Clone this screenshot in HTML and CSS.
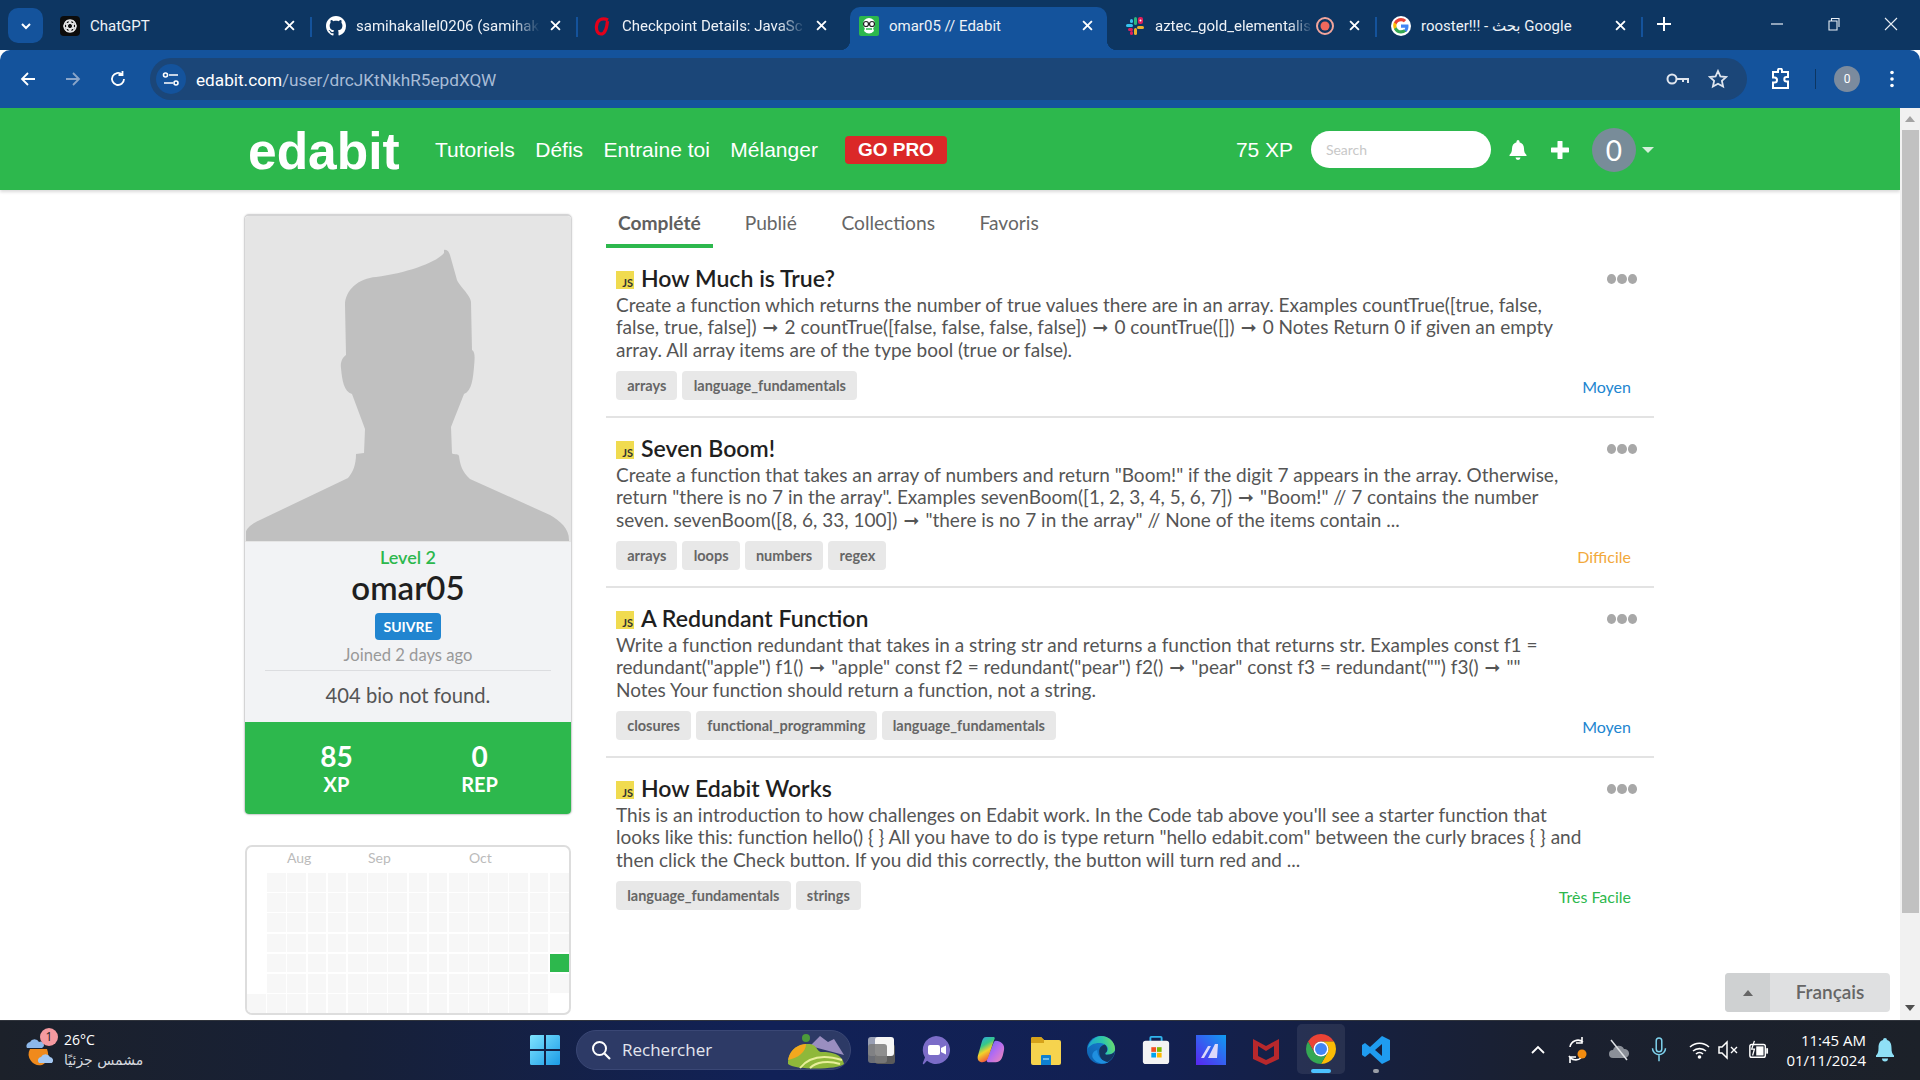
FILE: index.html
```html
<!DOCTYPE html>
<html lang="fr">
<head>
<meta charset="utf-8">
<title>omar05 // Edabit</title>
<link rel="stylesheet" href="styles.css">
</head>
<body>
<div class="tabstrip">
  <button class="tabsearch"><svg viewBox="0 0 12 12" width="12" height="12"><path d="M2 4l4 4 4-4" fill="none" stroke="#fff" stroke-width="2"/></svg></button>
  <div class="tab sep">
    <svg class="fav" viewBox="0 0 20 20"><rect width="20" height="20" rx="4" fill="#0c0c0c"/><g fill="none" stroke="#e8e8e8" stroke-width="1.3"><circle cx="10" cy="10" r="6"/><ellipse cx="10" cy="10" rx="6" ry="2.6" transform="rotate(60 10 10)"/><ellipse cx="10" cy="10" rx="6" ry="2.6" transform="rotate(-60 10 10)"/><ellipse cx="10" cy="10" rx="6" ry="2.6"/></g></svg>
    <span class="tabtitle">ChatGPT</span>
    <svg class="x" viewBox="0 0 10 10"><path d="M1 1l8 8M9 1l-8 8" stroke="#fff" stroke-width="1.7"/></svg>
  </div>
  <div class="tab sep">
    <svg class="fav" viewBox="0 0 16 16"><path fill="#fff" d="M8 0C3.58 0 0 3.58 0 8c0 3.54 2.29 6.53 5.47 7.59.4.07.55-.17.55-.38 0-.19-.01-.82-.01-1.49-2.01.37-2.53-.49-2.69-.94-.09-.23-.48-.94-.82-1.13-.28-.15-.68-.52-.01-.53.63-.01 1.08.58 1.23.82.72 1.21 1.87.87 2.33.66.07-.52.28-.87.51-1.07-1.78-.2-3.64-.89-3.64-3.95 0-.87.31-1.59.82-2.15-.08-.2-.36-1.02.08-2.12 0 0 .67-.21 2.2.82.64-.18 1.32-.27 2-.27s1.36.09 2 .27c1.53-1.04 2.2-.82 2.2-.82.44 1.1.16 1.92.08 2.12.51.56.82 1.27.82 2.15 0 3.07-1.87 3.75-3.65 3.95.29.25.54.73.54 1.48 0 1.07-.01 1.93-.01 2.2 0 .21.15.46.55.38A8.013 8.013 0 0016 8c0-4.42-3.58-8-8-8z"/></svg>
    <span class="tabtitle fade">samihakallel0206 (samihak</span>
    <svg class="x" viewBox="0 0 10 10"><path d="M1 1l8 8M9 1l-8 8" stroke="#fff" stroke-width="1.7"/></svg>
  </div>
  <div class="tab">
    <svg class="fav" viewBox="0 0 20 20"><path d="M16 4C10 1 5 4 4.500 10 4 15 6 18 9 18c5 0 6-8 6.500-13" fill="none" stroke="#e2001a" stroke-width="3.200"/></svg>
    <span class="tabtitle fade">Checkpoint Details: JavaSc</span>
    <svg class="x" viewBox="0 0 10 10"><path d="M1 1l8 8M9 1l-8 8" stroke="#fff" stroke-width="1.7"/></svg>
  </div>
  <div class="tab active">
    <svg class="fav" viewBox="0 0 20 20"><rect width="20" height="20" rx="2" fill="#2db84d"/><circle cx="10" cy="8" r="6" fill="#fff"/><path d="M5 15q5 5 10 0l-1-3H6z" fill="#fff"/><circle cx="7" cy="8" r="2.500" fill="none" stroke="#222" stroke-width="1.200"/><circle cx="13" cy="8" r="2.500" fill="none" stroke="#222" stroke-width="1.200"/><path d="M7 13h6" stroke="#2db84d" stroke-width="1.500"/></svg>
    <span class="tabtitle">omar05 // Edabit</span>
    <svg class="x" viewBox="0 0 10 10"><path d="M1 1l8 8M9 1l-8 8" stroke="#fff" stroke-width="1.7"/></svg>
  </div>
  <div class="tab sep">
    <svg class="fav" viewBox="0 0 20 20"><rect x="1" y="8" width="7" height="3" rx="1.500" fill="#36c5f0"/><rect x="5" y="3" width="3" height="4" rx="1.500" fill="#36c5f0"/><rect x="9" y="1" width="3" height="8" rx="1.500" fill="#2eb67d"/><rect x="13" y="1" width="5" height="7" rx="2" fill="#e01e5a"/><circle cx="15.500" cy="4.500" r="1" fill="#fff"/><rect x="12" y="10" width="7" height="3" rx="1.500" fill="#ecb22e"/><rect x="9" y="12" width="3" height="7" rx="1.500" fill="#ecb22e"/><rect x="3" y="12" width="5" height="3" rx="1.500" fill="#e01e5a"/><rect x="5" y="15" width="3" height="4" rx="1.500" fill="#e01e5a"/></svg>
    <span class="tabtitle fade short">aztec_gold_elementalis</span>
    <svg class="rec" viewBox="0 0 20 20"><circle cx="10" cy="10" r="8" fill="none" stroke="#f2a59c" stroke-width="2"/><circle cx="10" cy="10" r="4.500" fill="#f0685c"/></svg>
    <svg class="x" viewBox="0 0 10 10"><path d="M1 1l8 8M9 1l-8 8" stroke="#fff" stroke-width="1.7"/></svg>
  </div>
  <div class="tab sep">
    <svg class="fav" viewBox="0 0 24 24"><circle cx="12" cy="12" r="12" fill="#fff"/><path fill="#4285f4" d="M21 12.200c0-.7-.1-1.300-.2-1.900H12v3.700h5.100c-.2 1.200-.9 2.200-1.900 2.800v2.400h3.100C20 17.500 21 15.100 21 12.200z"/><path fill="#34a853" d="M12 21c2.500 0 4.600-.8 6.200-2.300l-3.100-2.400c-.8.600-1.900.9-3.100.9-2.400 0-4.500-1.600-5.200-3.800H3.600v2.400C5.200 19 8.400 21 12 21z"/><path fill="#fbbc05" d="M6.800 13.400c-.4-1.200-.4-2.500 0-3.700V7.300H3.600c-1.300 2.600-1.300 5.600 0 8.200z"/><path fill="#ea4335" d="M12 6.200c1.400 0 2.600.5 3.500 1.400l2.700-2.700C16.600 3.400 14.500 2.500 12 2.500c-3.600 0-6.800 2-8.400 5l3.200 2.400C7.500 7.700 9.600 6.200 12 6.200z"/></svg>
    <span class="tabtitle">rooster!!! - بحث Google</span>
    <svg class="x" viewBox="0 0 10 10"><path d="M1 1l8 8M9 1l-8 8" stroke="#fff" stroke-width="1.7"/></svg>
  </div>
  <svg class="newtab" viewBox="0 0 14 14"><path d="M7 0v14M0 7h14" stroke="#fff" stroke-width="2"/></svg>
  <div class="winctl">
    <svg viewBox="0 0 14 14"><path d="M1 7h12" stroke="#e8eef5" stroke-width="1.200"/></svg>
    <svg viewBox="0 0 14 14"><path d="M2 4h8v9H2zM4.500 4V1.500h7.500V10" fill="none" stroke="#e8eef5" stroke-width="1.100"/></svg>
    <svg viewBox="0 0 14 14"><path d="M1 1l12 12M13 1L1 13" stroke="#e8eef5" stroke-width="1.100"/></svg>
  </div>
</div>

<div class="toolbar">
  <div class="navbtns">
    <svg viewBox="0 0 18 18"><path d="M16 9H3M9 3L3 9l6 6" fill="none" stroke="#fff" stroke-width="1.800"/></svg>
    <svg viewBox="0 0 18 18"><path d="M2 9h13M9 3l6 6-6 6" fill="none" stroke="#8aa5c9" stroke-width="1.800"/></svg>
    <svg viewBox="0 0 18 18"><path d="M15 9a6 6 0 1 1-2-4.500M13.500 1v4h-4" fill="none" stroke="#fff" stroke-width="1.800"/></svg>
  </div>
  <div class="omnibox">
    <span class="siteinfo"><svg viewBox="0 0 18 18" width="18" height="18"><g fill="none" stroke="#fff" stroke-width="1.600"><path d="M7 5h9M2 13h9"/><circle cx="3.500" cy="5" r="2"/><circle cx="14" cy="13" r="2"/></g></svg></span>
    <span class="url"><span class="host">edabit.com</span>/user/drcJKtNkhR5epdXQW</span>
    <svg class="okey" viewBox="0 0 24 16"><g fill="none" stroke="#dfe5ee" stroke-width="2"><circle cx="6" cy="8" r="4.500"/><path d="M10.500 8H22v4M17 8v3"/></g></svg>
    <svg class="ostar" viewBox="0 0 20 20"><path d="M10 2l2.400 5.400 5.800.6-4.300 3.900 1.200 5.700L10 14.700l-5.100 2.900 1.200-5.700L1.800 8l5.800-.6z" fill="none" stroke="#dfe5ee" stroke-width="1.800"/></svg>
  </div>
  <div class="toolright">
    <svg class="puzzle" viewBox="0 0 20 22"><path d="M7 4V2.500a2 2 0 0 1 4 0V4h6v5h-1.500a2.200 2.200 0 0 0 0 4.400H17V20H2v-5.500h1.500a2.500 2.500 0 0 0 0-5H2V4z" fill="none" stroke="#fff" stroke-width="2"/></svg>
    <span class="tooldiv"></span>
    <span class="profile">0</span>
    <svg class="kebab" viewBox="0 0 4 18"><circle cx="2" cy="2.500" r="1.800" fill="#fff"/><circle cx="2" cy="9" r="1.800" fill="#fff"/><circle cx="2" cy="15.500" r="1.800" fill="#fff"/></svg>
  </div>
</div>

<div class="viewport">
  <div class="page">
    <header class="hdr">
      <a class="logo">edabit</a>
      <nav class="mainnav"><a>Tutoriels</a><a>Défis</a><a>Entraine toi</a><a>Mélanger</a></nav>
      <a class="gopro">GO PRO</a>
      <span class="xp">75 XP</span>
      <span class="search">Search</span>
      <svg class="bell" viewBox="0 0 18 20"><path d="M9 0a1.500 1.500 0 0 1 1.500 1.500v.7C13.500 3 15 5.500 15 8.500c0 3.500 1 5 2.500 6.500v1H.5v-1C2 13.500 3 12 3 8.500c0-3 1.500-5.500 4.500-6.300v-.7A1.500 1.500 0 0 1 9 0zM6.500 17.500h5a2.500 2.500 0 0 1-5 0z" fill="#fff"/></svg>
      <svg class="plus" viewBox="0 0 18 18"><path d="M9 1v16M1 9h16" stroke="#fff" stroke-width="5" stroke-linecap="round"/></svg>
      <span class="useravatar">0</span>
      <span class="caret"></span>
    </header>
    <div class="content">
      <aside class="side">
        <section class="card">
          <div class="photo">
            <svg viewBox="245 216 326 326" width="326" height="326"><path fill="#c0c0c0" d="M444 250c3-1 5 2 6 5l7 25c1 4 14 16 14 22l1 48c3 2 3 6 2 17s-2 24-10 27l-13 33 1 26c0 2 6 0 7 3 1 8 3 16 11 23l80 36c10 6 19 13 19 25v1H246v-9c0-3 5-8 14-12l88-42c5-6 8-13 8-24l8-1 1-24-13-35c-8-2-10-14-11-26-1-6 2-11 5-13l-1-50c0-15 14-27 31-28 30-4 60-14 68-24z"/></svg>
          </div>
          <div class="info">
            <div class="level">Level 2</div>
            <h2 class="uname">omar05</h2>
            <button class="follow">SUIVRE</button>
            <div class="joined">Joined 2 days ago</div>
            <div class="bio">404 bio not found.</div>
          </div>
          <div class="stats">
            <div class="stat"><b>85</b><span>XP</span></div>
            <div class="stat"><b>0</b><span>REP</span></div>
          </div>
        </section>
        <section class="cal">
          <div class="months"><span class="maug">Aug</span><span class="msep">Sep</span><span class="moct">Oct</span></div>
          <div class="grid">
            <i class="e"></i><i></i><i></i><i></i><i></i><i></i><i></i><i></i><i></i><i></i><i></i><i></i><i></i><i></i><i></i><i></i>
            <i class="e"></i><i></i><i></i><i></i><i></i><i></i><i></i><i></i><i></i><i></i><i></i><i></i><i></i><i></i><i></i><i></i>
            <i class="e"></i><i></i><i></i><i></i><i></i><i></i><i></i><i></i><i></i><i></i><i></i><i></i><i></i><i></i><i></i><i></i>
            <i class="e"></i><i></i><i></i><i></i><i></i><i></i><i></i><i></i><i></i><i></i><i></i><i></i><i></i><i></i><i></i><i></i>
            <i class="e"></i><i></i><i></i><i></i><i></i><i></i><i></i><i></i><i></i><i></i><i></i><i></i><i></i><i></i><i></i><i class="g"></i>
            <i class="e"></i><i></i><i></i><i></i><i></i><i></i><i></i><i></i><i></i><i></i><i></i><i></i><i></i><i></i><i></i><i></i>
            <i></i><i></i><i></i><i></i><i></i><i></i><i></i><i></i><i></i><i></i><i></i><i></i><i></i><i></i><i></i><i class="e"></i>
          </div>
        </section>
      </aside>
      <main class="feed">
        <div class="ftabs"><a class="on">Complété</a><a>Publié</a><a>Collections</a><a>Favoris</a></div>

        <article class="item">
          <div class="itext">
            <h3><span class="js">JS</span>How Much is True?</h3>
            <p>Create a function which returns the number of true values there are in an array. Examples countTrue([true, false, false, true, false]) &#8202;➞&#8202; 2 countTrue([false, false, false, false]) &#8202;➞&#8202; 0 countTrue([]) &#8202;➞&#8202; 0 Notes Return 0 if given an empty array. All array items are of the type bool (true or false).</p>
            <div class="tags"><span>arrays</span><span>language_fundamentals</span></div>
          </div>
          <div class="iside"><span class="dots"><i></i><i></i><i></i></span><span class="diff med">Moyen</span></div>
        </article>

        <article class="item">
          <div class="itext">
            <h3><span class="js">JS</span>Seven Boom!</h3>
            <p>Create a function that takes an array of numbers and return "Boom!" if the digit 7 appears in the array. Otherwise, return "there is no 7 in the array". Examples sevenBoom([1, 2, 3, 4, 5, 6, 7]) &#8202;➞&#8202; "Boom!" // 7 contains the number seven. sevenBoom([8, 6, 33, 100]) &#8202;➞&#8202; "there is no 7 in the array" // None of the items contain ...</p>
            <div class="tags"><span>arrays</span><span>loops</span><span>numbers</span><span>regex</span></div>
          </div>
          <div class="iside"><span class="dots"><i></i><i></i><i></i></span><span class="diff hard">Difficile</span></div>
        </article>

        <article class="item">
          <div class="itext">
            <h3><span class="js">JS</span>A Redundant Function</h3>
            <p>Write a function redundant that takes in a string str and returns a function that returns str. Examples const f1 = redundant("apple") f1() &#8202;➞&#8202; "apple" const f2 = redundant("pear") f2() &#8202;➞&#8202; "pear" const f3 = redundant("") f3() &#8202;➞&#8202; ""<br>Notes Your function should return a function, not a string.</p>
            <div class="tags"><span>closures</span><span>functional_programming</span><span>language_fundamentals</span></div>
          </div>
          <div class="iside"><span class="dots"><i></i><i></i><i></i></span><span class="diff med">Moyen</span></div>
        </article>

        <article class="item last">
          <div class="itext">
            <h3><span class="js">JS</span>How Edabit Works</h3>
            <p>This is an introduction to how challenges on Edabit work. In the Code tab above you'll see a starter function that looks like this: function hello() { } All you have to do is type return "hello edabit.com" between the curly braces { } and then click the Check button. If you did this correctly, the button will turn red and ...</p>
            <div class="tags"><span>language_fundamentals</span><span>strings</span></div>
          </div>
          <div class="iside"><span class="dots"><i></i><i></i><i></i></span><span class="diff easy">Très Facile</span></div>
        </article>
      </main>
    </div>
    <div class="lang"><span class="langarrow"><b></b></span><span class="langname">Français</span></div>
  </div>
  <div class="scrollbar">
    <span class="arrow up"></span>
    <span class="thumb"></span>
    <span class="arrow down"></span>
  </div>
</div>

<footer class="taskbar">
  <div class="weather">
    <span class="wicon">
      <svg viewBox="0 0 32 38" width="32" height="38"><path d="M5 18a11 11 0 0 0 12 16c5-2 8-8 5-16z" fill="#f08a1c"/><path d="M2 17a4 4 0 0 1 3-6 5 5 0 0 1 9 0 3 3 0 0 1 3 6z" fill="#8db8ea"/><path d="M14 32a3.500 3.500 0 0 1 2-6 5 5 0 0 1 9 0 3.500 3.500 0 0 1 2 6z" fill="#a4c8f2"/></svg>
      <span class="wbadge">1</span>
    </span>
    <span class="wtext"><span>26°C</span><span class="wsub">مشمس جزئيًا</span></span>
  </div>
  <svg class="winlogo" viewBox="0 0 30 30"><defs><linearGradient id="wg" x1="0" y1="0" x2="1" y2="1"><stop offset="0" stop-color="#7fe4ff"/><stop offset="1" stop-color="#1b9be6"/></linearGradient></defs><path fill="url(#wg)" d="M0 1.500A1.500 1.500 0 0 1 1.500 0H14v14H0zM16 0h12.500A1.500 1.500 0 0 1 30 1.500V14H16zM0 16h14v14H1.500A1.500 1.500 0 0 1 0 28.500zM16 16h14v12.500a1.500 1.500 0 0 1-1.500 1.500H16z"/></svg>
  <div class="tsearch">
    <svg class="tsq" viewBox="0 0 20 20"><circle cx="8.500" cy="8.500" r="6.500" fill="none" stroke="#fff" stroke-width="2"/><path d="M13.500 13.500L19 19" stroke="#fff" stroke-width="2.200"/></svg>
    <span class="tstxt">Rechercher</span>
    <svg class="tsart" viewBox="0 0 60 40"><path d="M24 16l10-10 8 6 6-3 10 16z" fill="#9a8ec0"/><path d="M2 34c0-14 10-20 20-20s8 8 14 8c10 0 20 2 22 12-6 6-50 6-56 0z" fill="#8fb83a"/><path d="M2 30C4 18 14 14 20 14c0 8-8 14-18 16z" fill="#f2a81e"/><path d="M14 38c8-10 22-14 42-8M24 38c6-6 18-8 30-4" fill="none" stroke="#e8ef9a" stroke-width="2"/><circle cx="20" cy="8" r="4" fill="#4c9a3a"/></svg>
  </div>
  <div class="apps">
    <span class="app"><svg viewBox="0 0 30 30"><rect x="2" y="2" width="19" height="19" rx="3" fill="#f4f4f4" opacity=".6"/><rect x="9" y="9" width="20" height="20" rx="3" fill="#5a5a5a"/><rect x="9" y="2" width="19" height="19" rx="3" fill="#f6f6f6"/><rect x="2" y="9" width="19" height="19" rx="3" fill="#7b7b7b" opacity=".85"/></svg></span>
    <span class="app"><svg viewBox="0 0 30 30"><path d="M15 1a14 14 0 1 1-9 24.700L3 29c-1 .5-1.500 0-1-1.500l2-5A14 14 0 0 1 15 1z" fill="#7b6cc8"/><rect x="7" y="10" width="12" height="10" rx="2" fill="#fff"/><path d="M20 13l5-2.500v9L20 17z" fill="#fff"/></svg></span>
    <span class="app"><svg viewBox="0 0 30 32"><defs><linearGradient id="cp1" x1="0" y1="0" x2=".4" y2="1"><stop offset="0" stop-color="#2f9df0"/><stop offset=".4" stop-color="#35c98a"/><stop offset=".65" stop-color="#f2d32a"/><stop offset="1" stop-color="#f2553a"/></linearGradient><linearGradient id="cp2" x1="0" y1="0" x2="1" y2="1"><stop offset="0" stop-color="#5a6cf0"/><stop offset=".5" stop-color="#b56cf0"/><stop offset="1" stop-color="#f58ab0"/></linearGradient></defs><path d="M20 6c3 0 5 1 7 3 3 3 2 7 1 11-1 5-3 9-8 9h-7c-3 0-3-2-2-4l6-15c1-3 2-4 3-4z" fill="url(#cp2)"/><path d="M10 2h7c3 0 2 2 1 4l-6 18c-1 3-3 5-6 5-4 0-6-3-5-7l4-14c1-4 2-6 5-6z" fill="url(#cp1)"/></svg></span>
    <span class="app"><svg viewBox="0 0 30 30"><path d="M0 4a2 2 0 0 1 2-2h8l3 3h15a2 2 0 0 1 2 2v21a2 2 0 0 1-2 2H2a2 2 0 0 1-2-2z" fill="#f6d34e"/><path d="M0 4a2 2 0 0 1 2-2h8l3 3v3H0z" fill="#d6a21a"/><path d="M10 21a1 1 0 0 1 1-1h8a1 1 0 0 1 1 1v9H10z" fill="#0f80d0"/><path d="M12 24h6" stroke="#8ed0f5" stroke-width="1.500"/></svg></span>
    <span class="app"><svg viewBox="0 0 32 32"><defs><linearGradient id="ed" x1="0" y1="1" x2="1" y2="0"><stop offset="0" stop-color="#0d5fae"/><stop offset="1" stop-color="#1a86d8"/></linearGradient><linearGradient id="ed2" x1="0" y1=".6" x2="1" y2=".4"><stop offset="0" stop-color="#1ba3d8"/><stop offset=".6" stop-color="#2dc6a8"/><stop offset="1" stop-color="#6fdc68"/></linearGradient></defs><circle cx="16" cy="16" r="15" fill="url(#ed)"/><path d="M1.500 15C3 7 10 1 16 1c8 0 15 6 15 14 0 5-5 6-9 6-2 0-2-2 0-3 2-2 2-6-2-8C14 7 5 9 1.500 15z" fill="url(#ed2)"/><path d="M14 17c0-3 2-6 6-7 3 2 3 6 2 8-2 1-2 3 0 3 4 0 7-1 9-4-1 6-4 10-9 12-3 0-8-4-8-12z" fill="#14345f"/><path d="M12 16c0 7 5 12 12 13-6 3-14 1-17-5-1-4 1-7 5-8z" fill="#1f8fe0"/></svg></span>
    <span class="app"><svg viewBox="0 0 30 32"><path d="M9 7V3a1 1 0 0 1 1-1h10a1 1 0 0 1 1 1v4" fill="none" stroke="#31b5ee" stroke-width="2"/><rect x="1" y="6" width="28" height="25" rx="3" fill="#f3f3f3"/><rect x="10" y="13" width="5" height="5" fill="#f25022"/><rect x="16" y="13" width="5" height="5" fill="#7fba00"/><rect x="10" y="19" width="5" height="5" fill="#00a4ef"/><rect x="16" y="19" width="5" height="5" fill="#ffb900"/></svg></span>
    <span class="app"><svg viewBox="0 0 30 30"><defs><linearGradient id="mm" x1="1" y1="0" x2="0" y2="1"><stop offset="0" stop-color="#0f9cf0"/><stop offset="1" stop-color="#5a24f0"/></linearGradient></defs><rect width="30" height="30" fill="url(#mm)"/><path d="M5 23l7-12h3l-7 12zM12 23l7-14h3l-1 14z" fill="#dcd8fa"/></svg></span>
    <span class="app"><svg viewBox="0 0 28 30"><path d="M1 4l13 7 13-7v20l-13 6-13-6zM6 11v10l8 4 8-4V11l-8 5z" fill="#b8282c" fill-rule="evenodd"/></svg></span>
    <span class="app current"><svg viewBox="2 2 20 20"><path fill="#ea4335" d="M3.340 7A10 10 0 0 1 20.660 7H12a5 5 0 0 0-4.330 7.500z"/><path fill="#fbbc05" d="M20.660 7A10 10 0 0 1 12 22l4.330-7.500A5 5 0 0 0 12 7z"/><path fill="#34a853" d="M12 22A10 10 0 0 1 3.340 7l4.330 7.500a5 5 0 0 0 8.660 0z"/><circle cx="12" cy="12" r="5" fill="#fff"/><circle cx="12" cy="12" r="4" fill="#4285f4"/></svg></span>
    <span class="app open"><svg viewBox="0 0 30 30"><path d="M21 1l8 4v20l-8 4-12-11-5 4-3-2v-10l3-2 5 4zM21 9l-7 6 7 6z" fill="#1f9cf0" fill-rule="evenodd"/></svg></span>
  </div>
  <div class="tray">
    <div class="trayA">
      <svg class="i14" viewBox="0 0 14 10"><path d="M1 8l6-6 6 6" fill="none" stroke="#fff" stroke-width="1.800"/></svg>
      <svg class="i20t" viewBox="0 0 20 30"><path d="M3 12a8 8 0 0 1 13-5M14 23a8 8 0 0 1-12-2M15 2v6h-6M3 28v-6h6" fill="none" stroke="#fff" stroke-width="1.600"/><circle cx="15" cy="19" r="4.500" fill="#f28c0f"/></svg>
      <svg class="i20" viewBox="0 0 20 24"><path d="M4 20a4 4 0 0 1 0-8 6 6 0 0 1 11-1 4.500 4.500 0 0 1 1 9z" fill="#8b9099"/><path d="M2 2l16 20" stroke="#dfe2e6" stroke-width="1.500"/></svg>
      <svg class="i16" viewBox="0 0 16 28"><rect x="5" y="1" width="6" height="15" rx="3" fill="none" stroke="#7fd3ee" stroke-width="1.600"/><path d="M1 12a7 7 0 0 0 14 0M8 19v7" fill="none" stroke="#7fd3ee" stroke-width="1.600"/></svg>
      <svg class="i21" viewBox="0 0 21 20"><g fill="none" stroke="#fff" stroke-width="1.600"><path d="M1 7a14 14 0 0 1 19 0M4 11a10 10 0 0 1 13 0"/><path d="M7 14a5 5 0 0 1 7 0"/></g><circle cx="10.500" cy="17" r="1.800" fill="#fff"/></svg>
    </div>
    <div class="trayB">
      <svg class="i20" viewBox="0 0 20 20"><path d="M1 7h3l5-5v16l-5-5H1z" fill="none" stroke="#fff" stroke-width="1.500"/><path d="M13 7l6 6M19 7l-6 6" stroke="#fff" stroke-width="1.400"/></svg>
      <svg class="i21" viewBox="0 0 21 22"><rect x="1" y="5" width="17" height="14" rx="2" fill="none" stroke="#fff" stroke-width="1.600"/><rect x="19" y="9" width="2" height="6" fill="#fff"/><rect x="8" y="7" width="8" height="10" fill="#fff"/><path d="M6 1L3 10h3l-2 7" fill="none" stroke="#fff" stroke-width="1.400"/></svg>
    </div>
    <div class="clock"><span>11:45 AM</span><span>01/11/2024</span></div>
    <svg class="tbell" viewBox="0 0 18 24"><path d="M9 0a2 2 0 0 1 2 2c3.500 1 4.500 4 4.500 8 0 4 .8 6 2.500 7.500V19H0v-1.500C1.700 16 2.500 14 2.500 10c0-4 1-7 4.500-8a2 2 0 0 1 2-2zM6 20.500h6a3 3 0 0 1-6 0z" fill="#8fe0f6"/></svg>
  </div>
</footer>
</body>
</html>
```

FILE: styles.css
```css
* { box-sizing: border-box; }
html, body { margin: 0; height: 100%; overflow: hidden; }
body { display: flex; flex-direction: column; height: 1080px; background: #fff; font-family: "Lato", "DejaVu Sans", sans-serif; color: #333; }
a { cursor: pointer; }
svg { display: block; flex: none; }

/* Tab strip */
.tabstrip { height: 50px; flex: none; background: #0d3662; display: flex; align-items: stretch; padding: 7px 0 0 8px; font-family: "Roboto", "DejaVu Sans", sans-serif; font-size: 15px; color: #eef2f7; position: relative; }
.tabsearch { width: 35px; height: 35px; margin-top: 1px; margin-right: 3px; border: 0; border-radius: 10px; background: #14539c; display: flex; align-items: center; justify-content: center; padding: 0; }
.tab { width: 266px; flex: none; display: flex; align-items: center; padding: 0 17px 6px 14px; position: relative; }
.tab.sep::after { content: ""; position: absolute; right: 0; top: 10px; height: 20px; width: 2px; background: #14539c; }
.fav { width: 20px; height: 20px; margin-right: 10px; }
.tabtitle { flex: 1; overflow: hidden; white-space: nowrap; font-size: 15px; }
.tabtitle.fade { -webkit-mask-image: linear-gradient(90deg, #000 85%, transparent); mask-image: linear-gradient(90deg, #000 85%, transparent); }
.x { width: 11px; height: 11px; margin-left: 10px; }
.rec { width: 20px; height: 20px; margin: 0 4px 0 2px; }
.tab.active { background: #14539c; border-radius: 10px 10px 0 0; margin: 0 4px 0 6px; width: 257px; padding: 0 14px 6px 9px; }
.tab.active::before, .tab.active::after { content: ""; position: absolute; bottom: 0; width: 10px; height: 10px; }
.tab.active::before { left: -10px; background: radial-gradient(circle at 0 0, transparent 10px, #14539c 10.5px); }
.tab.active::after { right: -10px; background: radial-gradient(circle at 100% 0, transparent 10px, #14539c 10.5px); }
.newtab { width: 14px; height: 14px; margin: 10px 0 0 14px; }
.winctl { position: absolute; top: 17px; left: 1770px; display: flex; gap: 43px; }
.winctl svg { width: 14px; height: 14px; }

/* Toolbar */
.toolbar { height: 58px; flex: none; background: #14539c; border-radius: 10px 10px 0 0; display: flex; align-items: center; }
.navbtns { width: 150px; flex: none; display: flex; padding-left: 19px; gap: 27px; }
.navbtns svg { width: 18px; height: 18px; }
.omnibox { width: 1597px; height: 42px; margin-top: 0; border-radius: 21px; background: #1b4678; display: flex; align-items: center; padding-left: 6px; }
.siteinfo { width: 30px; height: 30px; border-radius: 50%; background: #14539c; display: flex; align-items: center; justify-content: center; }
.url { flex: 1; margin: 1px 0 0 10px; font-family: "Roboto", sans-serif; font-size: 17.2px; color: #a8bcd6; }
.host { color: #fff; }
.okey { width: 24px; height: 16px; }
.ostar { width: 20px; height: 20px; margin: 0 19px 0 18px; }
.toolright { flex: 1; display: flex; align-items: center; padding-left: 24px; }
.puzzle { width: 20px; height: 22px; }
.tooldiv { width: 1px; height: 20px; background: #0d3662; margin: 0 18px 0 24px; }
.profile { width: 26px; height: 26px; border-radius: 50%; background: #7b8b9e; color: #fff; font: 12px "Roboto", sans-serif; display: flex; align-items: center; justify-content: center; }
.kebab { width: 4px; height: 18px; margin-left: 30px; }

/* Page */
.viewport { flex: 1; min-height: 0; display: flex; overflow: hidden; }
.page { flex: 1; min-width: 0; position: relative; overflow: hidden; }
.scrollbar { width: 20px; flex: none; background: #f1f1f1; display: flex; flex-direction: column; align-items: center; padding-top: 1px; }
.arrow { width: 0; height: 0; border-left: 5px solid transparent; border-right: 5px solid transparent; margin: 7px 0; }
.arrow.up { border-bottom: 6px solid #a3a3a3; }
.arrow.down { border-top: 6px solid #505050; margin-top: 92px; }
.thumb { width: 17px; height: 783px; margin-top: 1px; background: #c1c1c1; }

.hdr { height: 82px; background: #2db84d; box-shadow: 0 2px 3px rgba(0,0,0,.15); display: flex; align-items: center; padding: 2px 0 0 248px; color: #fff; font-family: "Liberation Sans", Arial, sans-serif; position: relative; }
.logo { font-size: 51.5px; font-weight: 700; width: 187px; flex: none; margin-top: 1px; }
.mainnav { display: flex; gap: 20.5px; font-size: 21px; }
.gopro { margin-left: 27px; width: 102px; height: 28px; background: #db2828; border-radius: 4px; font-weight: 700; font-size: 19px; display: flex; align-items: center; justify-content: center; }
.xp { margin-left: 289px; font-size: 21px; width: 75px; flex: none; }
.search { width: 180px; height: 37px; margin-top: -2px; border-radius: 19px; background: #fff; color: #c8c8c8; font: 14px "Lato", sans-serif; display: flex; align-items: center; padding-left: 15px; }
.bell { width: 18px; height: 20px; margin-left: 18px; }
.plus { width: 18px; height: 18px; margin-left: 24px; }
.useravatar { width: 44px; height: 44px; border-radius: 50%; background: #788c99; margin-left: 23px; color: #fff; display: flex; align-items: center; justify-content: center; font: 28px "Lato", sans-serif; }
.caret { width: 0; height: 0; border-left: 6px solid transparent; border-right: 6px solid transparent; border-top: 6px solid #d5f0db; margin-left: 6px; }

.content { display: flex; padding: 24px 0 0 244px; gap: 34px; }
.side { width: 328px; flex: none; }
.card { height: 601px; border: 1px solid #d4d4d5; border-width: 2px 1px 1px; border-radius: 5px; overflow: hidden; display: flex; flex-direction: column; box-shadow: 0 0 2px rgba(0,0,0,.15); }
.photo { height: 326px; flex: none; background: #e5e5e5; }
.info { flex: 1; background: #f2f3f5; display: flex; flex-direction: column; align-items: center; }
.level { color: #2db84d; font-size: 18px; font-weight: 600; line-height: 22px; margin-top: 4px; }
.uname { margin: 0; font-size: 33px; font-weight: 600; line-height: 38px; color: #1f1f1f; }
.follow { margin-top: 7px; width: 66px; height: 27px; border: 0; background: #2185d0; border-radius: 4px; color: #fff; font: 700 14px "Lato", sans-serif; padding: 0; }
.joined { margin-top: 5px; font-size: 16.6px; line-height: 20px; color: #999; width: 286px; text-align: center; padding-bottom: 5px; border-bottom: 1px solid #dcdde0; }
.bio { margin-top: 12px; font-size: 20.2px; line-height: 24px; color: #555; }
.stats { height: 92px; flex: none; background: #2db84d; color: #fff; display: flex; padding: 0 20px; }
.stat { flex: 1; display: flex; flex-direction: column; align-items: center; padding-top: 16px; }
.stat b { font-size: 28px; line-height: 36px; font-weight: 700; }
.stat span { font-size: 20px; line-height: 21px; font-weight: 700; }

.cal { margin: 30px 0 0 1px; height: 170px; border: 2px solid #ddd; border-radius: 7px; overflow: hidden; width: 326px; }
.months { height: 26px; display: flex; font-size: 14px; color: #bbb; line-height: 22px; }
.maug { margin-left: 40px; width: 81px; }
.msep { width: 101px; }
.grid { display: grid; grid-template-columns: repeat(16, 18.7px); grid-auto-rows: 18.7px; gap: 1.5px; padding-left: 0; }
.grid i { background: #f7f7f7; }
.grid i.e { background: transparent; }
.grid i.g { background: #2db84d; }

.feed { width: 1048px; flex: none; }
.ftabs { display: flex; gap: 44.5px; height: 34px; font-size: 19.2px; color: #666; }
.ftabs a { line-height: 17px; }
.ftabs a.on { font-weight: 700; border-bottom: 4px solid #2db84d; padding: 0 12px; margin-right: -12.5px; color: #5f5f5f; }
.item { height: 170px; display: flex; border-bottom: 2px solid #e3e3e3; padding: 15px 0 0 10px; }
.item.last { border-bottom: 0; }
.itext { width: 966px; flex: none; }
h3 { margin: 0 0 1px; font-size: 23.1px; font-weight: 600; line-height: 30px; color: #1f1f1f; display: flex; align-items: center; }
.js { width: 18px; height: 18px; margin: 3px 7px 0 0; background: #f0db4f; color: #323330; font-size: 11px; font-weight: 700; display: flex; align-items: flex-end; justify-content: flex-end; padding: 0 1px 0 0; line-height: 12px; }
p { margin: 0; font-size: 19px; line-height: 22.4px; color: #555; }
.tags { display: flex; gap: 5px; margin-top: 10px; }
.tags span { height: 29px; background: #e8e8e8; border-radius: 4px; padding: 0 11.2px; font-size: 14.5px; font-weight: 700; color: #666; line-height: 29px; }
.iside { flex: 1; min-width: 0; display: flex; flex-direction: column; align-items: flex-end; padding-right: 23px; }
.dots { display: flex; gap: 1px; margin-top: 11px; margin-right: -6px; }
.dots i { width: 9.5px; height: 10px; border-radius: 50%; background: #a8a8a8; }
.diff { margin-top: 93px; font-size: 16px; line-height: 20px; white-space: nowrap; }
.med { color: #2185d0; }
.hard { color: #f2a93b; }
.easy { color: #2db84d; }
.lang { position: absolute; left: 1725px; top: 865px; width: 165px; height: 39px; display: flex; border-radius: 4px; overflow: hidden; background: #dfe0e1; color: #666; font-size: 19px; }
.langarrow { width: 45px; background: #cfd1d2; display: flex; align-items: center; justify-content: center; }
.langarrow b { width: 0; height: 0; border-left: 5px solid transparent; border-right: 5px solid transparent; border-bottom: 6px solid #666; }
.langname { flex: 1; display: flex; align-items: center; justify-content: center; font-weight: 600; padding-bottom: 2px; }

/* Taskbar */
.taskbar { height: 60px; flex: none; background: linear-gradient(90deg, #1c212a 0, #172037 18%, #112157 40%, #122052 60%, #1a2030 80%, #1c2129 100%); border-top: 1px solid #30343c; display: flex; align-items: center; padding: 0 26px 2px 0; color: #fff; font-family: "Open Sans", "Noto Sans", sans-serif; }
.weather { width: 530px; flex: none; display: flex; align-items: center; padding-left: 25px; }
.wicon { position: relative; width: 32px; height: 38px; }
.wbadge { position: absolute; left: 15px; top: -3px; width: 18px; height: 18px; border-radius: 50%; background: #f59aa0; color: #222; font-size: 12px; line-height: 18px; text-align: center; }
.wtext { display: flex; flex-direction: column; margin-left: 7px; font-size: 14px; line-height: 20px; }
.wsub { font-family: "DejaVu Sans", sans-serif; font-size: 14px; color: #d5d8de; }
.winlogo { width: 30px; height: 30px; }
.tsearch { width: 275px; height: 40px; margin-left: 16px; border-radius: 20px; background: #2d3a66; border: 1px solid #3a4775; display: flex; align-items: center; padding-left: 14px; }
.tsq { width: 20px; height: 20px; }
.tstxt { flex: 1; margin-left: 11px; font-size: 17px; color: #e3e6ee; }
.tsart { width: 60px; height: 40px; margin-right: 4px; }
.apps { display: flex; margin-left: 2px; }
.app { width: 55px; height: 59px; display: flex; align-items: center; justify-content: center; position: relative; }
.app svg { width: 30px; height: 30px; }
.app.current { background: rgba(255,255,255,.08); border-radius: 5px; width: 48px; height: 50px; margin: 4px 3.500px 0; }
.app.current::after { content: ""; position: absolute; bottom: 1px; left: 14px; width: 20px; height: 4px; border-radius: 2px; background: #4cc2ff; }
.app.open::after { content: ""; position: absolute; bottom: 6px; left: 25px; width: 6px; height: 4px; border-radius: 2px; background: #9a9ea6; }
.tray { margin-left: auto; display: flex; align-items: center; }
.trayA { display: flex; align-items: center; gap: 22px; }
.trayB { display: flex; align-items: center; gap: 10px; margin-left: 8px; }
.i14 { width: 14px; height: 10px; }
.i20 { width: 20px; height: 24px; }
.i20t { width: 20px; height: 30px; }
.i16 { width: 16px; height: 26px; }
.i21 { width: 21px; height: 20px; }
.clock { margin-left: 17px; width: 80px; display: flex; flex-direction: column; align-items: flex-end; font-size: 15px; line-height: 20px; white-space: nowrap; }
.tbell { width: 18px; height: 24px; margin-left: 10px; }
```
